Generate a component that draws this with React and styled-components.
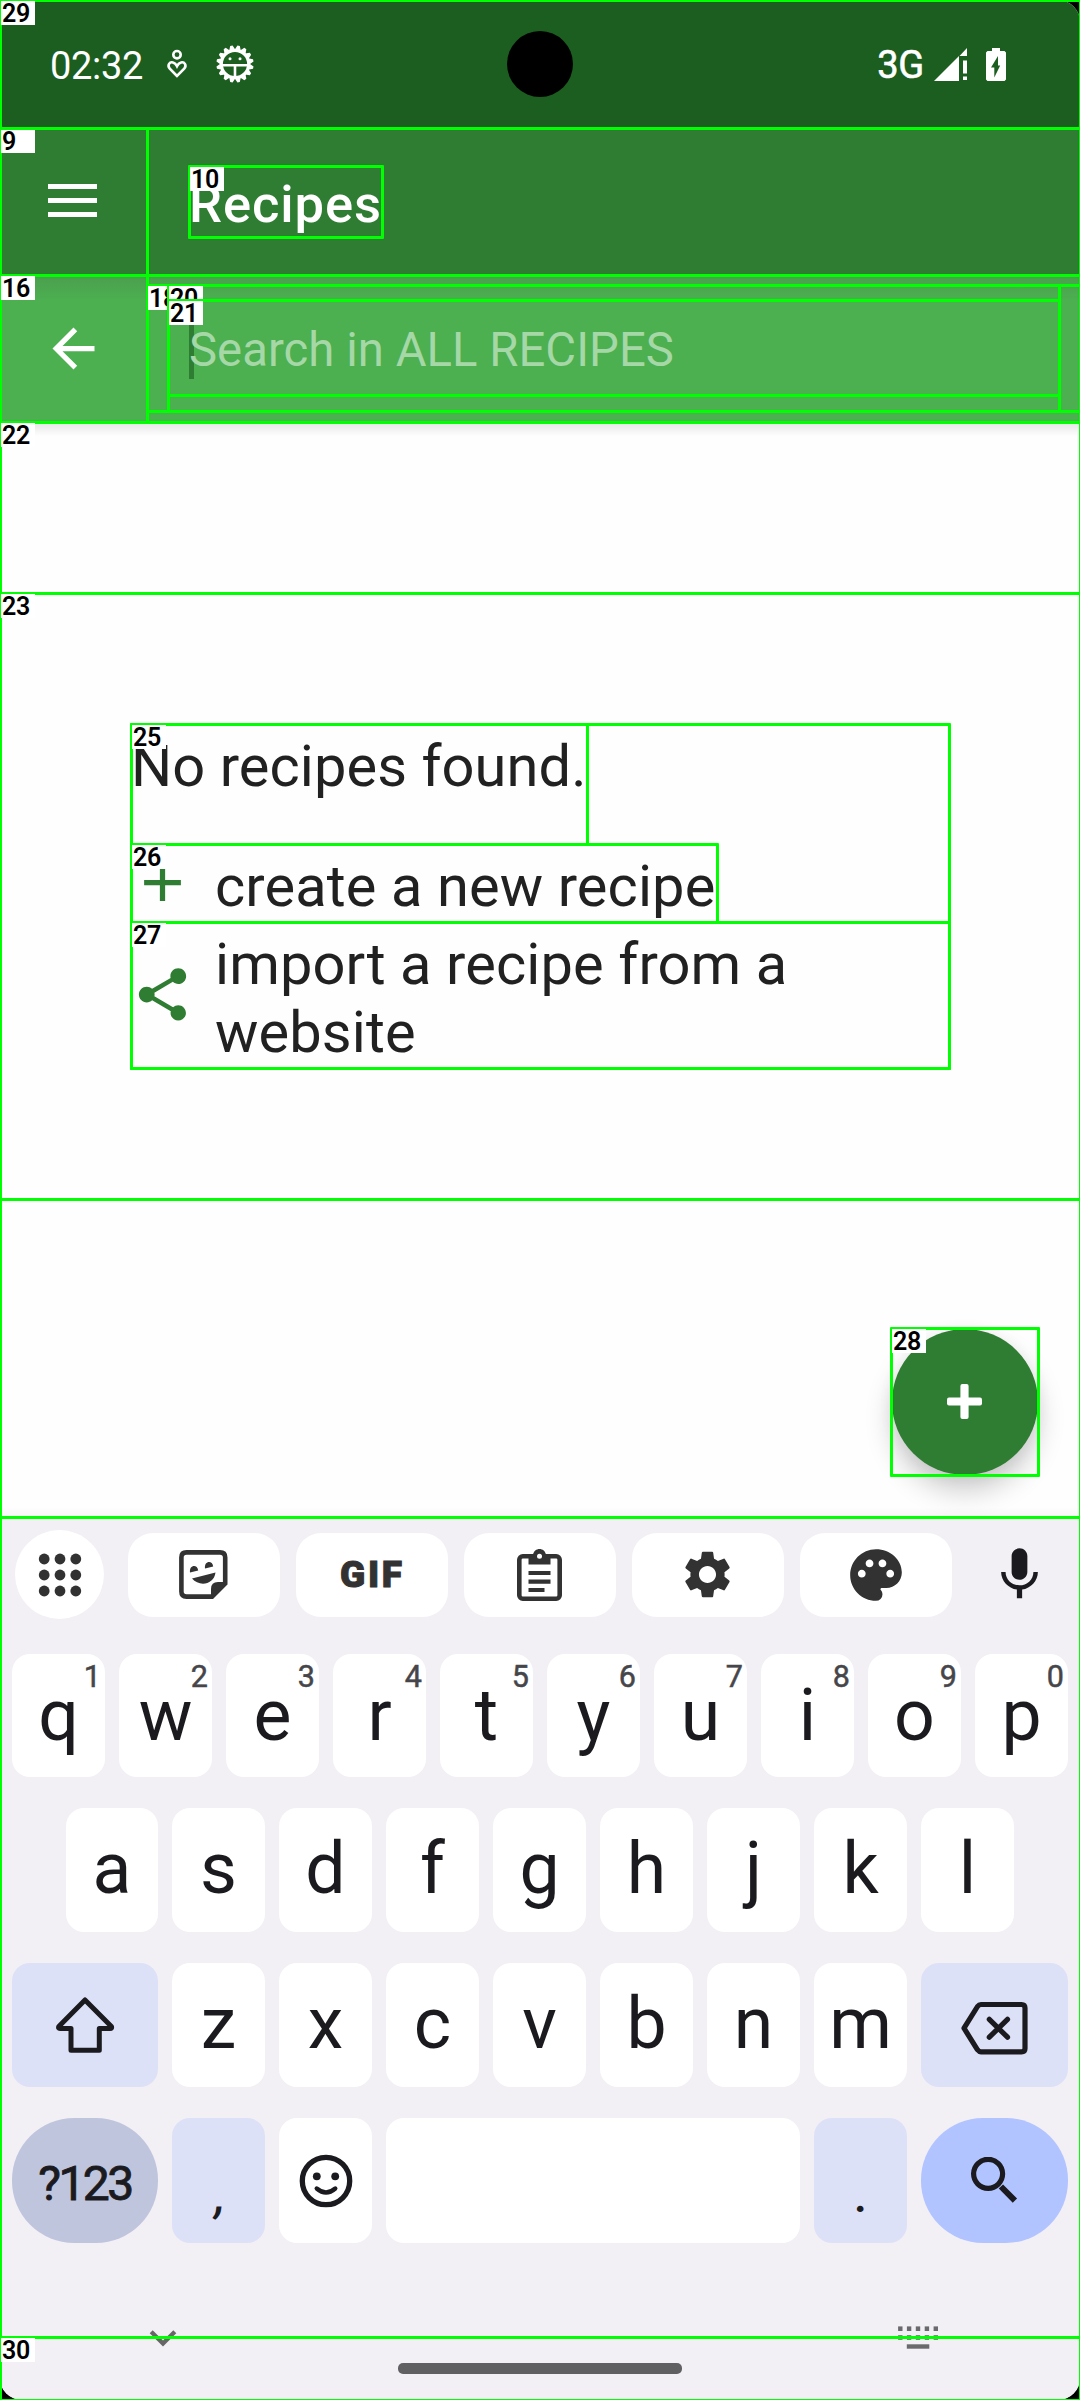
import React from "react";
import styled, { createGlobalStyle } from "styled-components";
import { MdArrowBack, MdAdd, MdShare, MdSettings, MdPalette, MdMic } from "react-icons/md";

const GlobalStyle = createGlobalStyle`
  *, *::before, *::after { box-sizing: border-box; }
  body { margin: 0; background: #000; font-family: Roboto, "Liberation Sans", sans-serif; }
  svg { display: block; flex: none; }
`;

const Stage = styled.div`
  position: relative;
  width: 1080px;
  height: 2400px;
  overflow: hidden;
  background: #000;
`;

const Phone = styled.div`
  display: flex;
  flex-direction: column;
  width: 1080px;
  height: 2400px;
  overflow: hidden;
  border-radius: 22px;
  background: #fefefe;
`;

/* ---------- status bar ---------- */

const StatusBar = styled.header`
  display: grid;
  grid-template-columns: 1fr 66px 1fr;
  align-items: center;
  flex: none;
  height: 128px;
  background: #1c5e20;
  color: #fff;
`;

const StatusGroup = styled.div`
  display: flex;
  align-items: center;
  padding-left: 50px;
`;

const StatusEnd = styled.div`
  display: flex;
  align-items: center;
  justify-content: flex-end;
  padding-right: 74px;
`;

const Clock = styled.span`
  width: 116px;
  padding-top: 4px;
  font-size: 38px;
  line-height: 44px;
  letter-spacing: -0.3px;
`;

const Network = styled.span`
  margin-right: 10px;
  padding-top: 1px;
  font-size: 38px;
  line-height: 44px;
  letter-spacing: -0.2px;
  -webkit-text-stroke: 0.6px #fff;
`;

const Camera = styled.div`
  height: 66px;
  border-radius: 50%;
  background: #000;
`;

/* ---------- app bars ---------- */

const Toolbar = styled.div`
  display: flex;
  align-items: center;
  flex: none;
  height: 147px;
  background: #2e7d32;
`;

const IconSlot = styled.div`
  display: flex;
  justify-content: center;
  flex: none;
  width: 147px;
  padding: 0 ${(p) => p.$inset || 0}px ${(p) => p.$inset || 0}px 0;
  color: #fff;
`;

const Title = styled.h1`
  margin: 0;
  padding: 5px 0 0 42px;
  color: #fff;
  font-size: 52.5px;
  line-height: 64px;
  font-weight: 500;
  letter-spacing: 0.9px;
`;

const SearchBar = styled(Toolbar)`
  background: linear-gradient(rgba(70, 90, 70, 0.2), rgba(70, 90, 70, 0) 25px), #4caf50;
`;

const SearchField = styled.div`
  display: flex;
  align-items: center;
  height: 95px;
  padding-left: 42px;
`;

const Caret = styled.i`
  width: 5px;
  height: 57px;
  margin-right: -5px;
  margin-top: 4px;
  background: #2e7d32;
`;

const Placeholder = styled.span`
  padding-top: 3px;
  color: #a5d7a7;
  font-size: 47.25px;
  line-height: 56px;
  letter-spacing: 0.05px;
`;

/* ---------- content ---------- */

const Content = styled.main`
  display: flex;
  flex-direction: column;
  flex: none;
  height: 1095px;
  padding: 302px 0 0 131px;
  background:
    linear-gradient(rgba(0, 0, 0, 0.1), rgba(0, 0, 0, 0)) top / 100% 14px no-repeat,
    linear-gradient(rgba(0, 0, 0, 0), rgba(0, 0, 0, 0.03)) bottom / 100% 10px no-repeat,
    #fefefe;
`;

const Message = styled.p`
  margin: 0;
  height: 120px;
  padding-top: 8px;
  color: #212121;
  font-size: 57.75px;
  line-height: 68px;
  letter-spacing: 0.08px;
`;

const Action = styled.div`
  display: flex;
  align-items: center;
  gap: 21px;
  width: 818px;
  color: #2e7d32;

  svg {
    margin-bottom: 1px;
  }
`;

const ActionText = styled.span`
  padding: 8px 0 2px;
  color: #212121;
  font-size: 57.75px;
  line-height: 68px;
  letter-spacing: 0.12px;
`;

const Fab = styled.button`
  display: flex;
  align-items: center;
  justify-content: center;
  align-self: flex-end;
  width: 146px;
  height: 146px;
  margin: 261px 42px 0 0;
  padding: 0 1px 1px 0;
  border: 0;
  border-radius: 50%;
  background: #2e7d32;
  box-shadow: 0 16px 28px rgba(0, 0, 0, 0.2), 0 3px 16px rgba(0, 0, 0, 0.06);
`;

/* ---------- keyboard ---------- */

const Keyboard = styled.section`
  display: flex;
  flex-direction: column;
  flex: 1;
  padding-top: 13px;
  background: #f2eff5;
  color: #1b1b1f;
`;

const Tools = styled.div`
  display: flex;
  align-items: center;
  height: 89px;
  padding-left: 15px;
  color: #323232;
`;

const AppsButton = styled.div`
  display: flex;
  align-items: center;
  justify-content: center;
  width: 89px;
  height: 89px;
  margin-right: 24px;
  border-radius: 50%;
  background: #fff;
`;

const Tool = styled.div`
  display: flex;
  align-items: center;
  justify-content: center;
  width: 152px;
  height: 84px;
  margin-right: 16px;
  padding-right: 1px;
  border-radius: 25px;
  background: #fff;
`;

const GifLabel = styled.span`
  font-size: 37px;
  line-height: 44px;
  font-weight: 900;
  letter-spacing: 2.6px;
  margin-right: -1.6px;
  -webkit-text-stroke: 1px #323232;
`;

const MicSlot = styled.div`
  margin-left: 20px;
  color: #1b1b1f;
`;

const Rows = styled.div`
  display: flex;
  flex-direction: column;
  gap: 31px;
  margin-top: 35px;
`;

const Row = styled.div`
  display: flex;
  justify-content: center;
  gap: 14px;
  height: ${(p) => p.$height || 124}px;
  padding: 0 12px;
`;

const tones = {
  plain: "#fff",
  soft: "#dde1f8",
  mode: "#c0c5de",
  enter: "#b1c4ff",
};

const KeyCap = styled.div`
  position: relative;
  display: flex;
  align-items: center;
  justify-content: center;
  width: ${(p) => p.$width || 93}px;
  padding-top: ${(p) => p.$drop || 0}px;
  border-radius: ${(p) => (p.$round ? 62 : 18)}px;
  background: ${(p) => tones[p.$tone || "plain"]};
`;

const Letter = styled.span`
  margin-top: -3px;
  font-size: 71.5px;
  line-height: 80px;
`;

const Hint = styled.span`
  position: absolute;
  top: 8px;
  right: 4px;
  color: #46464a;
  font-size: 30.5px;
  line-height: 30px;
  -webkit-text-stroke: 0.5px #46464a;
`;

const ModeText = styled.span`
  padding-top: 6px;
  font-size: 48px;
  line-height: 56px;
  letter-spacing: -2.5px;
  -webkit-text-stroke: 0.9px #1b1b1f;
`;

const Punctuation = styled.span`
  padding-top: 31px;
  padding-left: ${(p) => (p.$slant ? 8 : 0)}px;
  font-size: 48px;
  line-height: 56px;
  font-weight: 500;
  transform: skewX(${(p) => (p.$slant ? -8 : 0)}deg);
`;

const NavIcons = styled.div`
  display: flex;
  justify-content: space-between;
  align-items: center;
  height: 26px;
  margin-top: 82px;
  padding: 0 141px 0 149px;
`;

const HomeBar = styled.div`
  width: 284px;
  height: 11px;
  margin: 12px auto 0;
  border-radius: 5px;
  background: #606062;
`;

/* ---------- bounding box overlay ---------- */

const Bounds = styled.div`
  position: absolute;
  left: ${(p) => p.$x - 1}px;
  top: ${(p) => p.$y - 1}px;
  width: ${(p) => p.$r - p.$x + 3}px;
  height: ${(p) => p.$b - p.$y + 3}px;
  border: 3px solid #00ff00;
  border-radius: 1px;
`;

const Tag = styled.span`
  position: absolute;
  left: -1px;
  top: -1px;
  width: 34px;
  height: 24px;
  padding: 1px 0 0 1px;
  background: #fff;
  color: #000;
  font-size: 25px;
  line-height: 24px;
  font-weight: 600;
  letter-spacing: -0.4px;
`;

const bounds = [
  [0, 0, 1080, 2400],
  [0, 128, 1080, 275],
  [9, 0, 128, 147, 275],
  [10, 189, 166, 382, 237],
  [0, 275, 1080, 422],
  [16, 0, 275, 147, 422],
  [18, 147, 285, 1080, 411],
  [20, 168, 285, 1059, 411],
  [21, 168, 300, 1059, 395],
  [22, 0, 422, 1080, 1517],
  [23, 0, 593, 1080, 1199],
  [131, 724, 949, 1068],
  [25, 131, 724, 587, 844],
  [26, 131, 844, 717, 922],
  [27, 131, 922, 949, 1068],
  [28, 891, 1328, 1038, 1475],
  [29, 0, 0, 1080, 128],
  [30, 0, 2337, 1080, 2400],
].map((b) => (b.length === 5 ? b : [null, ...b]));

/* ---------- drawings ---------- */

const HeartIcon = () => (
  <svg width="22" height="30" viewBox="166 50 22 30" fill="none" stroke="#fff" strokeWidth="2.6">
    <circle cx="177" cy="55.7" r="3.7" />
    <path d="M177 77 L169.8 69.6 C166.8 66.2 169.8 62.4 173 63.5 C175 64.1 176.2 65.6 177 67.2 C177.8 65.6 179 64.1 181 63.5 C184.2 62.4 187.2 66.2 184.2 69.6 Z" />
  </svg>
);

const teeth = Array.from({ length: 16 }, (_, i) => i * 22.5 + 11.25);

const BugIcon = () => (
  <svg width="38" height="38" viewBox="-19 -19 38 38">
    {teeth.map((a) => (
      <path key={a} d="M-3.2 -14 L-1.2 -18.6 H1.2 L3.2 -14 Z" fill="#fff" transform={`rotate(${a})`} />
    ))}
    <circle r="13.6" fill="none" stroke="#fff" strokeWidth="3" />
    <path d="M-13 1.3 H13 M0 1 V13" stroke="#fff" strokeWidth="2.6" />
    <circle cx="-5" cy="-5.3" r="1.5" fill="#fff" />
    <circle cx="5" cy="-5.3" r="1.5" fill="#fff" />
  </svg>
);

const SignalIcon = () => (
  <svg width="33" height="33" viewBox="0 0 33 33" fill="#fff">
    <path d="M0 33 L25 8 V33 Z M33 0 V8 H25.5 Z M29 12.5 H33 V25.5 H29 Z M29 28.5 H33 V32 H29 Z" />
  </svg>
);

const BatteryIcon = () => (
  <svg width="20" height="33" viewBox="0 0 20 33">
    <path d="M6 0 H14 V3 H18.5 L20 4.5 V31.5 L18.5 33 H1.5 L0 31.5 V4.5 L1.5 3 H6 Z" fill="#fff" />
    <path d="M12 8 L5 19.5 H8.3 V29.5 L14.2 17.5 H12 Z" fill="#1c5e20" />
  </svg>
);

const MenuIcon = () => (
  <svg width="49" height="33" viewBox="0 0 49 33" fill="#fff">
    <path d="M0 0 H49 V5 H0 Z M0 14 H49 V19 H0 Z M0 28 H49 V33 H0 Z" />
  </svg>
);

const FabPlus = () => (
  <svg width="35" height="35" viewBox="0 0 35 35" fill="#fff">
    <rect x="13.4" y="0" width="8.2" height="35" rx="2" />
    <rect x="0" y="13.4" width="35" height="8.2" rx="2" />
  </svg>
);

const AppsIcon = () => (
  <svg width="44" height="44" viewBox="0 0 44 44" fill="#323232">
    {[6, 22, 38].map((y) => [6.2, 22, 37.8].map((x) => <circle key={`${x}-${y}`} cx={x} cy={y} r="5.4" />))}
  </svg>
);

const StickerIcon = () => (
  <svg width="49" height="49" viewBox="0 0 49 49">
    <path
      d="M7.5 2.4 H41 Q46.2 2.4 46.2 7.5 V33.5 L33 46.6 H7.5 Q2.4 46.6 2.4 41.5 V7.5 Q2.4 2.4 7.5 2.4 Z"
      fill="none"
      stroke="#323232"
      strokeWidth="4.6"
    />
    <path d="M32 48 V39 Q32 32 39 32 H48 V34 L34 48.5 Z" fill="#323232" />
    <path d="M11 22.5 C10 14.5 18.5 14 19.2 20.4 Z M26 18.5 C25 10.5 33.5 10 34.2 16.4 Z M13 28.5 L36.5 22.5 C35 35 20 37 13 28.5 Z" fill="#323232" />
  </svg>
);

const ClipboardIcon = () => (
  <svg width="45" height="52" viewBox="0 0 45 52">
    <rect x="2.3" y="7.3" width="40.4" height="42.4" rx="3.5" fill="none" stroke="#323232" strokeWidth="4.6" />
    <path d="M11.5 6 H16 C17 -2 28 -2 29 6 H33.5 V15.5 H11.5 Z" fill="#323232" />
    <circle cx="22.5" cy="7.2" r="2.5" fill="#fff" />
    <path d="M11.5 24 H33.5 M11.5 32.7 H33.5 M11.5 41 H27.5" stroke="#323232" strokeWidth="4.2" />
  </svg>
);

const ShiftIcon = () => (
  <svg width="60" height="60" viewBox="55 1995 60 60" fill="none" stroke="#1b1b1f" strokeWidth="5" strokeLinejoin="round">
    <path d="M85 2000 L58.8 2026.5 Q58 2028.6 60 2028.6 H71 V2050.2 H99.3 V2028.6 H110 Q112.2 2028.6 111.4 2026.5 Z" />
  </svg>
);

const BackspaceIcon = () => (
  <svg width="68" height="54" viewBox="960 2000.5 68 54" fill="none" stroke="#1b1b1f" strokeWidth="5.2" strokeLinecap="round" strokeLinejoin="round">
    <path d="M963 2027.7 L976.5 2006 Q978 2004 980 2004 H1020.5 Q1024 2004 1024 2007.5 V2048 Q1024 2051.3 1020.5 2051.3 H980 Q978 2051.3 976.5 2049.3 Z" />
    <path d="M988.3 2018.8 L1006.5 2036.7 M1006.5 2018.8 L988.3 2036.7" />
  </svg>
);

const SmileIcon = () => (
  <svg width="54" height="54" viewBox="-27 -27 54 54">
    <circle r="23.7" fill="none" stroke="#1b1b1f" strokeWidth="5.3" />
    <circle cx="-9.2" cy="-4.7" r="3.9" fill="#1b1b1f" />
    <circle cx="9.2" cy="-4.7" r="3.9" fill="#1b1b1f" />
    <path d="M-9.3 7.5 Q0 15.5 9.3 7.5" fill="none" stroke="#1b1b1f" strokeWidth="4.3" strokeLinecap="round" />
  </svg>
);

const SearchIcon = () => (
  <svg width="47" height="47" viewBox="970.6 2157 47 47" fill="none" stroke="#1b1b1f">
    <circle cx="987.7" cy="2173.8" r="14.5" strokeWidth="5.2" />
    <path d="M1000.5 2186.5 L1014.5 2200.7" strokeWidth="6" />
  </svg>
);

const ChevronIcon = () => (
  <svg width="28" height="18" viewBox="149 2328 28 18" fill="none" stroke="#666" strokeWidth="4.2">
    <path d="M151.2 2330.8 L163 2342.6 L174.8 2330.8" />
  </svg>
);

const KeyboardIcon = () => (
  <svg width="41" height="24" viewBox="897.6 2326 41 24" fill="#6a6a6c">
    {[2326.4, 2335.2].map((y) =>
      [897.7, 906.5, 915.4, 924.3, 933.2].map((x) => (
        <rect key={`${x}-${y}`} x={x} y={y} width="4.4" height="4.6" />
      ))
    )}
    <rect x="906.4" y="2344.3" width="22.5" height="4.4" />
  </svg>
);

const LetterKey = ({ char, hint, width }) => (
  <KeyCap $width={width} $drop={hint ? 3 : 0}>
    {hint && <Hint>{hint}</Hint>}
    <Letter>{char}</Letter>
  </KeyCap>
);

export default function App() {
  return (
    <Stage>
      <GlobalStyle />
      <Phone>
        <StatusBar>
          <StatusGroup>
            <Clock>02:32</Clock>
            <HeartIcon />
            <svg width="28" height="1" />
            <BugIcon />
          </StatusGroup>
          <Camera />
          <StatusEnd>
            <Network>3G</Network>
            <SignalIcon />
            <svg width="19" height="1" />
            <BatteryIcon />
          </StatusEnd>
        </StatusBar>

        <Toolbar>
          <IconSlot $inset={2}>
            <MenuIcon />
          </IconSlot>
          <Title>Recipes</Title>
        </Toolbar>

        <SearchBar>
          <IconSlot>
            <MdArrowBack size={63} />
          </IconSlot>
          <SearchField>
            <Caret />
            <Placeholder>Search in ALL RECIPES</Placeholder>
          </SearchField>
        </SearchBar>

        <Content>
          <Message>No recipes found.</Message>
          <Action>
            <MdAdd size={63} />
            <ActionText>create a new recipe</ActionText>
          </Action>
          <Action>
            <MdShare size={63} />
            <ActionText>import a recipe from a website</ActionText>
          </Action>
          <Fab>
            <FabPlus />
          </Fab>
        </Content>

        <Keyboard>
          <Tools>
            <AppsButton>
              <AppsIcon />
            </AppsButton>
            <Tool>
              <StickerIcon />
            </Tool>
            <Tool>
              <GifLabel>GIF</GifLabel>
            </Tool>
            <Tool>
              <ClipboardIcon />
            </Tool>
            <Tool>
              <MdSettings size={57} />
            </Tool>
            <Tool>
              <MdPalette size={62} />
            </Tool>
            <MicSlot>
              <MdMic size={63} />
            </MicSlot>
          </Tools>

          <Rows>
            <Row $height={123}>
              {[..."qwertyuiop"].map((c, i) => (
                <LetterKey key={c} char={c} hint={String((i + 1) % 10)} />
              ))}
            </Row>
            <Row>
              {[..."asdfghjkl"].map((c, i) => (
                <LetterKey key={c} char={c} width={i === 0 ? 92 : 93} />
              ))}
            </Row>
            <Row>
              <KeyCap $width={146} $tone="soft">
                <ShiftIcon />
              </KeyCap>
              {[..."zxcvbnm"].map((c) => (
                <LetterKey key={c} char={c} />
              ))}
              <KeyCap $width={147} $tone="soft" $drop={5}>
                <BackspaceIcon />
              </KeyCap>
            </Row>
            <Row $height={125}>
              <KeyCap $width={146} $tone="mode" $round>
                <ModeText>?123</ModeText>
              </KeyCap>
              <KeyCap $tone="soft">
                <Punctuation $slant>,</Punctuation>
              </KeyCap>
              <KeyCap>
                <SmileIcon />
              </KeyCap>
              <KeyCap $width={414} />
              <KeyCap $tone="soft">
                <Punctuation>.</Punctuation>
              </KeyCap>
              <KeyCap $width={147} $tone="enter" $round>
                <SearchIcon />
              </KeyCap>
            </Row>
          </Rows>

          <NavIcons>
            <ChevronIcon />
            <KeyboardIcon />
          </NavIcons>
          <HomeBar />
        </Keyboard>
      </Phone>

      {bounds.map(([tag, x, y, r, b], i) => (
        <Bounds key={i} $x={x} $y={y} $r={r} $b={b}>
          {tag && <Tag>{tag}</Tag>}
        </Bounds>
      ))}
    </Stage>
  );
}
